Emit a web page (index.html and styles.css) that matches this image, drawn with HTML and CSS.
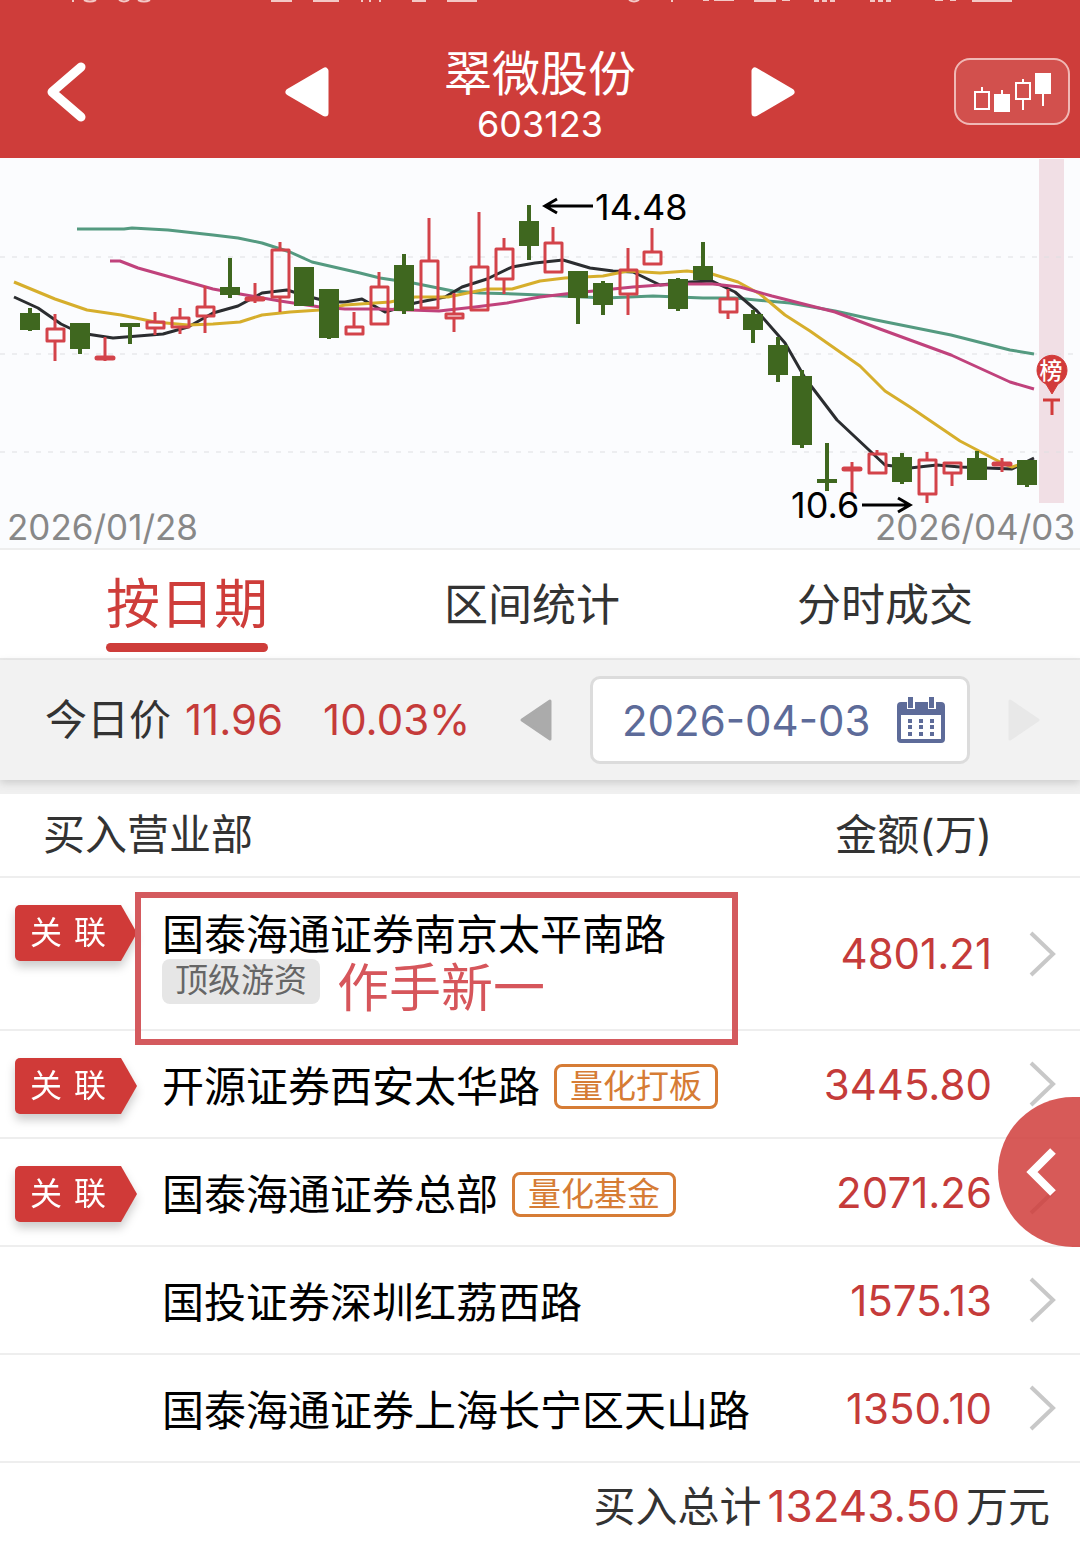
FILE: index.html
```html
<!DOCTYPE html>
<html lang="zh-CN">
<head>
<meta charset="utf-8">
<meta name="viewport" content="width=device-width, initial-scale=1">
<title>翠微股份 603123</title>
<link rel="stylesheet" href="styles.css">
</head>
<body>
<header class="header">
  <svg class="status" viewBox="0 0 1080 4" preserveAspectRatio="none" aria-hidden="true">
    <path d="M73 0v2M84 0q6 3 12 0M119 0q5 3 10 0M138 0q6 3 12 0M271 1h21M313 1h26M362 0v2M370 0v2M380 0v2M412 1h14M447 1h30M629 0q5 3 10 0M672 0v2M703 0h6M714 0h20M754 1h22M782 0h8M814 1h5M822 1h5M830 1h5M870 1h5M878 1h5M886 1h5M935 0h8M950 0h6M972 1h40"/>
  </svg>
  <div class="header-bar">
    <button class="icon-button back" type="button" aria-label="返回">
      <svg width="40" height="60" viewBox="0 0 40 60"><path d="M34 5 5 30 34 55" fill="none" stroke="#fff" stroke-width="9" stroke-linecap="round" stroke-linejoin="round"/></svg>
    </button>
    <div class="switcher">
      <button class="icon-button" type="button" aria-label="上一只">
        <svg width="44" height="50" viewBox="0 0 44 50"><path d="M4 25 40 4V46Z" fill="#fff" stroke="#fff" stroke-width="7" stroke-linejoin="round"/></svg>
      </button>
      <h1 class="stock"><span class="stock-name">翠微股份</span><span class="stock-code">603123</span></h1>
      <button class="icon-button" type="button" aria-label="下一只">
        <svg width="44" height="50" viewBox="0 0 44 50"><path d="M40 25 4 4V46Z" fill="#fff" stroke="#fff" stroke-width="7" stroke-linejoin="round"/></svg>
      </button>
    </div>
    <button class="kline-button" type="button" aria-label="K线">
      <svg width="80" height="42" viewBox="972 69 80 42" fill="none" stroke="#fff" stroke-width="2"><path d="M975 90h14v17h-14zM982 90v-5M1016 81h14v16h-14zM1023 81v-4M1023 97v11M1002 92v-4M1043 92v12"/><path d="M995 93h14v16h-14zM1036 72h14v19h-14z" fill="#fff"/></svg>
    </button>
  </div>
</header>

<main>
<section class="chart-panel" aria-label="K线图">
  <svg class="chart" viewBox="0 158 1080 390">
    <rect x="1039" y="159" width="25" height="344" fill="#f1dfe5"/>
    <path class="grid" d="M0 257H1080M0 354H1080M0 452H1080"/>
    <g class="averages">
      <polyline stroke="#549a80" points="77,229 124,229 132,228 168,230 213,235 238,238 262,243 290,252 312,262 360,273 380,278 413,283 453,291 480,293 515,294 540,295 605,298 653,296 703,298 735,298 790,303 835,311 876,320 951,335 1010,350 1034,354"/>
      <polyline stroke="#2b2d30" points="14,297 38,308 61,324 80,333 113,338 163,334 188,327 213,313 238,306 262,293 287,290 310,297 330,302 345,302 362,299 385,312 415,303 445,297 462,287 487,279 512,267 535,263 563,260 590,268 613,271 633,272 660,285 690,282 712,281 735,292 757,311 785,343 805,378 837,420 885,465 910,468 937,465 960,467 1012,469 1034,458"/>
      <polyline stroke="#d6ae2c" points="14,282 55,299 87,310 121,315 155,322 188,325 213,324 240,322 262,315 290,312 320,310 345,305 390,302 415,297 448,297 487,289 512,289 540,281 565,278 603,276 628,271 660,273 687,271 712,274 738,282 760,294 785,315 810,331 860,366 885,391 910,407 960,441 1000,462 1012,467 1027,462"/>
      <polyline stroke="#c0427c" points="110,261 120,261 138,268 163,275 213,289 240,294 280,301 320,307 345,309 380,309 439,311 475,307 507,303 540,297 565,294 603,290 633,287 660,285 687,284 713,284 740,287 772,296 835,312 880,329 910,340 951,355 1010,382 1034,389"/>
    </g>
    <path class="up" d="M47 329h17v12H47zM55 314V329M55 341V361M105 337V361M147 322h17v6h-17zM155 312V322M155 328V335M172 318h17v9h-17zM180 308V318M180 327V334M197 307h17v9h-17zM205 286V307M205 316V333M255 283V303M272 250h17v47h-17zM280 242V250M280 297V312M346 327h17v7h-17zM354 312V327M371 287h17v37h-17zM379 272V287M421 261h17v47h-17zM429 218V261M446 314h17v4h-17zM454 293V314M454 318V332M471 267h17v43h-17zM479 212V267M496 249h17v30h-17zM504 238V249M504 279V294M545 243h17v29h-17zM553 227V243M620 270h17v24h-17zM628 248V270M628 294V315M644 252h17v12h-17zM652 228V252M720 299h17v13h-17zM728 289V299M728 312V319M852 462V495M869 454h17v19h-17zM877 450V454M919 460h17v34h-17zM927 452V460M927 494V503M944 463h17v10h-17zM952 473V486M1002 458V472"/>
    <path class="up-flat" d="M97 358H113M247 299H263M844 469H860M994 464H1010"/>
    <path class="down-wick" d="M30 308V331M80 324V354M130 325V344M230 258V298M304 268V305M329 290V339M404 254V314M529 205V260M578 272V324M603 281V315M678 278V311M703 242V280M753 310V343M778 337V382M802 370V448M827 443V491M902 453V484M977 451V480M1027 461V487"/>
    <path class="down-body" d="M30 313V330M80 323V349M130 323V327M230 287V295M304 267V306M329 289V338M404 265V311M529 221V246M578 271V298M603 283V305M678 279V309M703 266V280M753 314V330M778 345V375M802 376V445M827 479V483M902 457V482M977 458V480M1027 460V485"/>
    <g fill="none" stroke="#000" stroke-width="3"><path d="M545 206H593M557 199 545 206 557 213"/><path d="M862 505H910M898 498 910 505 898 512"/></g>
    <text class="peak" x="595" y="220">14.48</text>
    <text class="peak" x="791" y="518">10.6</text>
    <path d="M1052 394 1046 384A15 15 0 1 1 1058 384Z" fill="#d23b3a" stroke="#d23b3a"/>
    <text class="pin" x="1051" y="379" text-anchor="middle">榜</text>
    <path d="M1043 400H1060M1052 400V415" stroke="#d23b3a" stroke-width="3"/>
    <text class="day" x="7" y="540">2026/01/28</text>
    <text class="day" x="1075" y="540" text-anchor="end">2026/04/03</text>
  </svg>
</section>

<nav class="tabs">
  <a class="tab tab-active" href="#date">按日期</a>
  <a class="tab" href="#range">区间统计</a>
  <a class="tab" href="#ticks">分时成交</a>
</nav>

<section class="filter">
  <p class="quote"><span>今日价</span><span class="price">11.96</span><span class="change">10.03%</span></p>
  <div class="date-picker">
    <button class="icon-button" type="button" aria-label="前一天">
      <svg width="32" height="42" viewBox="0 0 32 42"><path d="M2 21 30 2V40Z" fill="#ababab" stroke="#ababab" stroke-width="3" stroke-linejoin="round"/></svg>
    </button>
    <label class="date-field">
      <input class="date-input" type="text" value="2026-04-03" aria-label="日期">
      <svg width="48" height="46" viewBox="0 0 48 46"><path d="M4 5H44Q48 5 48 9V42Q48 46 44 46H4Q0 46 0 42V9Q0 5 4 5ZM4 18V42H44V18Z" fill="#5d6b99" fill-rule="evenodd"/><path d="M10 0h8v12h-8zM31 0h8v12h-8z" fill="#fff"/><path d="M11 0h5v11h-5zM32 0h5v11h-5zM11 22h4v4h-4zM22 22h4v4h-4zM33 22h4v4h-4zM11 28h4v4h-4zM22 28h4v4h-4zM33 28h4v4h-4zM11 35h4v4h-4zM22 35h4v4h-4zM33 35h4v4h-4z" fill="#5d6b99"/></svg>
    </label>
    <button class="icon-button" type="button" aria-label="后一天" disabled>
      <svg width="32" height="42" viewBox="0 0 32 42"><path d="M30 21 2 2V40Z" fill="#e8e8e8" stroke="#e8e8e8" stroke-width="3" stroke-linejoin="round"/></svg>
    </button>
  </div>
</section>

<section class="brokers">
  <table class="broker-table">
    <thead>
      <tr><th class="head-name" colspan="2" scope="col">买入营业部</th><th class="head-amount" scope="col">金额(万)</th><th class="head-more"></th></tr>
    </thead>
    <tbody>
      <tr class="row row-tall">
        <td class="cell-link"><span class="ribbon"><span class="ribbon-face"><span>关</span><span>联</span></span></span></td>
        <td class="cell-name cell-marked"><span class="name">国泰海通证券南京太平南路</span><div class="notes"><span class="tag tag-grey">顶级游资</span><strong class="remark">作手新一</strong></div></td>
        <td class="cell-amount">4801.21</td>
        <td class="cell-more"><a class="more" href="#b1" aria-label="详情"><svg width="27" height="46" viewBox="0 0 27 46"><path d="M2 2 24 23 2 44"/></svg></a></td>
      </tr>
      <tr class="row">
        <td class="cell-link"><span class="ribbon"><span class="ribbon-face"><span>关</span><span>联</span></span></span></td>
        <td class="cell-name"><div class="line"><span class="name">开源证券西安太华路</span><span class="tag tag-orange">量化打板</span></div></td>
        <td class="cell-amount">3445.80</td>
        <td class="cell-more"><a class="more" href="#b2" aria-label="详情"><svg width="27" height="46" viewBox="0 0 27 46"><path d="M2 2 24 23 2 44"/></svg></a></td>
      </tr>
      <tr class="row">
        <td class="cell-link"><span class="ribbon"><span class="ribbon-face"><span>关</span><span>联</span></span></span></td>
        <td class="cell-name"><div class="line"><span class="name">国泰海通证券总部</span><span class="tag tag-orange">量化基金</span></div></td>
        <td class="cell-amount">2071.26</td>
        <td class="cell-more"><a class="more" href="#b3" aria-label="详情"><svg width="27" height="46" viewBox="0 0 27 46"><path d="M2 2 24 23 2 44"/></svg></a></td>
      </tr>
      <tr class="row">
        <td class="cell-link"></td>
        <td class="cell-name"><div class="line"><span class="name">国投证券深圳红荔西路</span></div></td>
        <td class="cell-amount">1575.13</td>
        <td class="cell-more"><a class="more" href="#b4" aria-label="详情"><svg width="27" height="46" viewBox="0 0 27 46"><path d="M2 2 24 23 2 44"/></svg></a></td>
      </tr>
      <tr class="row">
        <td class="cell-link"></td>
        <td class="cell-name"><div class="line"><span class="name">国泰海通证券上海长宁区天山路</span></div></td>
        <td class="cell-amount">1350.10</td>
        <td class="cell-more"><a class="more" href="#b5" aria-label="详情"><svg width="27" height="46" viewBox="0 0 27 46"><path d="M2 2 24 23 2 44"/></svg></a></td>
      </tr>
    </tbody>
  </table>
  <p class="total"><span>买入总计</span><strong class="total-value">13243.50</strong><span>万元</span></p>
  <button class="drawer" type="button" aria-label="展开">
    <svg width="32" height="50" viewBox="0 0 32 50"><path d="M28 4 7 25 28 46" fill="none" stroke="#fff" stroke-width="8"/></svg>
  </button>
</section>
</main>
</body>
</html>
```

FILE: styles.css
```css
*, *::before, *::after { box-sizing: border-box; }

body {
  margin: 0;
  background: #fff;
  color: #333;
  font-family: Inter, "Noto Sans CJK SC", sans-serif;
  font-size: 42px;
}

h1, p { margin: 0; font-weight: 400; }
strong { font-weight: 400; }
svg { display: block; }
a { color: inherit; text-decoration: none; }

button {
  margin: 0;
  padding: 0;
  border: 0;
  background: none;
}

/* Header */
.header { background: #ce3d3a; color: #fff; }

.status {
  width: 100%;
  height: 4px;
  fill: none;
  stroke: #f3c9c6;
  stroke-width: 2;
}

.header-bar {
  display: grid;
  grid-template-columns: 1fr 510px 1fr;
  align-items: center;
  padding: 31px 10px 10px;
}

.back { justify-self: start; margin-left: 37px; }

.switcher {
  display: flex;
  align-items: center;
  justify-content: space-between;
}

.stock {
  display: flex;
  flex-direction: column;
  align-items: center;
  padding-top: 13px;
}

.stock-name { font-size: 48px; line-height: 52px; }
.stock-code { font-size: 36px; line-height: 48px; }

.kline-button {
  justify-self: end;
  display: flex;
  align-items: center;
  justify-content: center;
  width: 116px;
  height: 67px;
  border: 2px solid #f0b8b5;
  border-radius: 16px;
  background: #d2504d;
}

/* Chart */
.chart-panel { background: #fbfcfe; border-bottom: 2px solid #eee; }
.chart { width: 100%; height: auto; }
.grid { stroke: #dedfe2; stroke-width: 1; stroke-dasharray: 5 7; }
.averages { fill: none; stroke-width: 3; stroke-linejoin: round; }
.up { fill: none; stroke: #d3434a; stroke-width: 3; stroke-linejoin: round; }
.up-flat { stroke: #d3434a; stroke-width: 5; stroke-linecap: round; }
.down-wick { stroke: #3f671f; stroke-width: 4; }
.down-body { stroke: #3f671f; stroke-width: 20; }
.peak { font: 36px Inter, sans-serif; fill: #000; }
.day { font: 35px Inter, sans-serif; fill: #888; }
.pin { font: 500 23px "Noto Sans CJK SC", sans-serif; fill: #fff; }

/* Tabs */
.tabs {
  display: grid;
  grid-template-columns: 374px 1fr 390px;
  justify-items: center;
  height: 110px;
  border-bottom: 2px solid #eaeaea;
}

.tab {
  display: flex;
  flex-direction: column;
  justify-content: space-between;
  font-size: 44px;
  line-height: 110px;
}

.tab-active {
  color: #ce3d3a;
  font-size: 54px;
  height: 102px;
}

.tab-active::after {
  content: "";
  flex: none;
  height: 9px;
  margin-top: -18px;
  border-radius: 5px;
  background: #ce3d3a;
}

/* Price and date */
.filter {
  position: relative;
  z-index: 1;
  display: flex;
  align-items: center;
  justify-content: space-between;
  height: 120px;
  padding: 0 40px 0 45px;
  background: #f2f2f2;
  box-shadow: 0 3px 8px #ccc;
}

.quote { display: flex; align-items: baseline; line-height: 60px; }
.price, .change { color: #c53b3a; }
.price { margin-left: 14px; }
.change { margin-left: 40px; }

.date-picker { display: flex; align-items: center; gap: 38px; }

.date-field {
  display: flex;
  align-items: center;
  justify-content: space-between;
  width: 380px;
  height: 88px;
  padding: 0 22px 0 29px;
  border: 3px solid #dcdcdc;
  border-radius: 10px;
  background: #fff;
}

.date-input {
  width: 262px;
  padding: 0;
  border: 0;
  background: none;
  color: #5d6b99;
  font: 42px Inter, sans-serif;
}

/* Broker list */
.brokers {
  position: relative;
  border-top: 14px solid #f0f0f0;
}

.broker-table {
  width: 100%;
  border-collapse: separate;
  border-spacing: 0;
  table-layout: auto;
}

th {
  height: 84px;
  padding: 0;
  border-bottom: 2px solid #eee;
  font-weight: 400;
  line-height: 60px;
}

.head-name { padding-left: 43px; text-align: left; }
.head-amount { text-align: right; white-space: nowrap; }

td {
  height: 108px;
  padding: 0;
  border-bottom: 2px solid #eee;
}

.row-tall td { height: 153px; }

.cell-link { width: 162px; padding: 27px 0 0 15px; vertical-align: top; }

.ribbon {
  display: block;
  width: 122px;
  filter: drop-shadow(0 6px 5px #ccc);
}

.ribbon-face {
  display: flex;
  gap: 12px;
  height: 56px;
  padding-left: 15px;
  border-radius: 5px 0 0 5px;
  background: #d03a38;
  clip-path: polygon(0 0, 106px 0, 100% 50%, 106px 100%, 0 100%);
  color: #fff;
  font-size: 32px;
  line-height: 56px;
}

.cell-name { padding-top: 5px; color: #000; }
.line { display: flex; align-items: center; gap: 14px; }
.name { display: block; line-height: 48px; white-space: nowrap; }

.cell-marked { position: relative; padding-top: 33px; vertical-align: top; }

.cell-marked::after {
  content: "";
  position: absolute;
  top: 14px;
  left: -27px;
  width: 603px;
  height: 153px;
  border: 6px solid #d45a5e;
}

.notes { display: flex; align-items: flex-start; gap: 17px; }

.tag {
  height: 45px;
  padding: 0 13px;
  border-radius: 8px;
  font-size: 33px;
  line-height: 42px;
  white-space: nowrap;
}

.tag-grey { background: #e6e6e6; color: #666; }

.tag-orange {
  border: 3px solid #d67c35;
  color: #d67c35;
  line-height: 39px;
}

.remark { color: #d6565b; font-size: 52px; line-height: 60px; }

.cell-amount {
  color: #c53b3a;
  text-align: right;
}

.head-more, .cell-more { width: 88px; }
.cell-more { padding-left: 37px; }
.more { display: block; fill: none; stroke: #c8c8c8; stroke-width: 4; }

.total {
  display: flex;
  align-items: baseline;
  justify-content: flex-end;
  gap: 6px;
  padding: 5px 30px 0 0;
  line-height: 76px;
}

.total-value { color: #c53b3a; font-size: 44px; }

.drawer {
  position: absolute;
  top: 303px;
  right: 0;
  display: flex;
  align-items: center;
  width: 82px;
  height: 150px;
  padding-left: 27px;
  border-radius: 75px 0 0 75px;
  background: rgba(207, 58, 56, 0.84);
}
```
